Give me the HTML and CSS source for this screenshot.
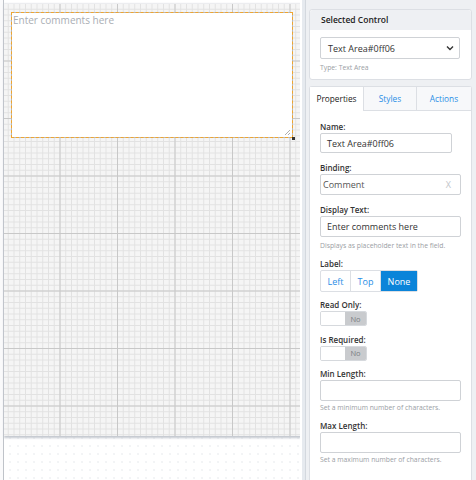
FILE: index.html
```html
<!DOCTYPE html>
<html>
<head>
<meta charset="utf-8">
<link rel="stylesheet" href="styles.css">
</head>
<body>
<div class="app">
  <div class="workspace">
    <div class="scroller">
      <div class="canvas">
        <div class="field">
          <div class="placeholder">Enter comments here</div>
          <svg class="grip" width="8" height="8" viewBox="0 0 8 8"><path d="M7 2 L2 7 M7 5 L5 7" stroke="#999" stroke-width="0.8"/></svg>
          <span class="handle"></span>
        </div>
      </div>
    </div>
  </div>
  <div class="splitter"></div>
  <div class="panel">
    <div class="card">
      <div class="card-head">Selected Control</div>
      <div class="card-body">
        <div class="select">
          <span>Text Area#0ff06</span>
          <svg width="8" height="6" viewBox="0 0 8 6"><path d="M1 1.5 L4 4.5 L7 1.5" fill="none" stroke="#333" stroke-width="1.4"/></svg>
        </div>
        <div class="hint">Type: Text Area</div>
      </div>
    </div>
    <div class="card tabs-card">
      <div class="tabs">
        <div class="tab active">Properties</div>
        <div class="tab">Styles</div>
        <div class="tab">Actions</div>
      </div>
      <div class="props">
        <div class="lbl">Name:</div>
        <div class="input short">Text Area#0ff06</div>
        <div class="lbl">Binding:</div>
        <div class="input binding"><span class="muted">Comment</span><span class="x">X</span></div>
        <div class="lbl">Display Text:</div>
        <div class="input with-hint">Enter comments here</div>
        <div class="hint loose">Displays as placeholder text in the field.</div>
        <div class="lbl">Label:</div>
        <div class="btn-group">
          <span class="b">Left</span><span class="b">Top</span><span class="b on">None</span>
        </div>
        <div class="lbl">Read Only:</div>
        <div class="toggle"><span class="t-off"></span><span class="t-no">No</span></div>
        <div class="lbl">Is Required:</div>
        <div class="toggle"><span class="t-off"></span><span class="t-no">No</span></div>
        <div class="lbl">Min Length:</div>
        <div class="input with-hint"></div>
        <div class="hint">Set a minimum number of characters.</div>
        <div class="lbl">Max Length:</div>
        <div class="input with-hint"></div>
        <div class="hint">Set a maximum number of characters.</div>
      </div>
    </div>
  </div>
</div>
</body>
</html>
```

FILE: styles.css
```css
* { box-sizing: border-box; }
html, body { margin: 0; padding: 0; }
body {
  font-family: "Open Sans", "Liberation Sans", sans-serif;
  font-size: 8px;
  color: #333;
  width: 476px;
  height: 480px;
  overflow: hidden;
  background: #fff;
}
.app {
  display: flex;
  height: 480px;
}
.workspace {
  flex: 0 0 300px;
  padding-left: 3px;
  background: #fafafb;
}
.scroller {
  height: 100%;
  padding-top: 4px;
  border-left: 1px solid #bfc3c9;
  background-color: #fff;
  background-image: radial-gradient(circle, #eceef1 0.6px, transparent 0.9px);
  background-size: 8px 8px;
  background-position: 2px 2px;
}
.canvas {
  width: 296px;
  height: 432px;
  background-color: #f5f5f5;
  background-image:
    linear-gradient(to right, #c8c8c8 1px, transparent 1px),
    linear-gradient(to bottom, #c8c8c8 1px, transparent 1px),
    linear-gradient(to right, #e2e2e2 1px, transparent 1px),
    linear-gradient(to bottom, #e2e2e2 1px, transparent 1px);
  background-size: 57.5px 57.5px, 57.5px 57.5px, 5.75px 5.75px, 5.75px 5.75px;
  background-position: -2px -1px;
  box-shadow: 1px 1px 2px 1px #c4c8cf;
  padding: 8px 0 0 7px;
}
.field {
  position: relative;
  width: 282px;
  height: 126px;
  background: #fff;
  border: 1px solid #b8b8b8;
  padding: 1px 1px;
}
.field::before {
  content: "";
  position: absolute;
  inset: -1px;
  border: 1px dashed #f0a52e;
  pointer-events: none;
}
.placeholder {
  font-size: 10px;
  color: #a9adb3;
  line-height: 13px;
}
.grip {
  position: absolute;
  right: 1px;
  bottom: 1px;
}
.handle {
  position: absolute;
  right: -3px;
  bottom: -3px;
  width: 3px;
  height: 3px;
  background: #333;
}
.splitter {
  flex: 0 0 6px;
  background: #e6eaef;
  border-left: 2px solid #fff;
  border-right: 1px solid #d3d8de;
}
.panel {
  flex: 1;
  background: #eef0f3;
  padding: 9px 4px 0 3px;
  display: flex;
  flex-direction: column;
  gap: 6px;
}
.card {
  background: #fff;
  border: 1px solid #dcdfe4;
  border-radius: 3px;
}
.card-head {
  background: #eef0f3;
  height: 20px;
  line-height: 20px;
  padding-left: 11px;
  font-weight: 600;
  font-size: 8.5px;
  color: #222;
  border-radius: 3px 3px 0 0;
}
.card-body {
  padding: 7px 11px 7px 10px;
}
.select {
  height: 22px;
  border: 1px solid #cfd2d6;
  border-radius: 2px;
  display: flex;
  align-items: center;
  justify-content: space-between;
  padding: 0 5px 0 7px;
  color: #333;
  font-size: 9px;
}
.hint {
  font-size: 6.8px;
  color: #9a9ea4;
  margin-top: 4px;
  line-height: 9px;
}
.tabs-card {
  flex: 1;
  border-bottom: none;
  border-radius: 3px 3px 0 0;
}
.tabs {
  display: flex;
  height: 24px;
}
.tab {
  flex: 0 0 53px;
  display: flex;
  align-items: center;
  justify-content: center;
  color: #2a8ee6;
  background: #f7f8fa;
  border-bottom: 1px solid #dcdfe4;
  border-left: 1px solid #dcdfe4;
  font-size: 8.3px;
}
.tab:last-child { flex: 1; }
.tab.active {
  color: #222;
  background: #fff;
  border-bottom-color: transparent;
  border-left: none;
}
.props {
  padding: 10px 10px 0 10px;
}
.lbl {
  font-weight: 600;
  color: #333;
  font-size: 8px;
  line-height: 11px;
  margin-bottom: 1px;
}
.input {
  height: 21px;
  border: 1px solid #cfd2d6;
  border-radius: 2px;
  display: flex;
  align-items: center;
  padding: 0 6px;
  margin-bottom: 9px;
  color: #333;
  font-size: 9px;
}
.input.short {
  width: 132px;
  height: 20px;
}
.input.binding {
  justify-content: space-between;
  padding: 0 9px 0 2px;
}
.input.with-hint { margin-bottom: 0; }
.muted { color: #555; }
.x { color: #c2c5c9; font-size: 9px; }
.props .hint {
  margin-top: 2px;
  margin-bottom: 8px;
}
.props .hint.loose {
  margin-top: 4px;
  margin-bottom: 8px;
}
.btn-group {
  display: flex;
  width: 98px;
  height: 22px;
  border: 1px solid #dcdfe4;
  border-radius: 2px;
  margin-bottom: 7px;
  font-size: 9px;
}
.b {
  display: flex;
  align-items: center;
  justify-content: center;
  color: #2a8ee6;
  width: 30px;
  border-right: 1px solid #dcdfe4;
}
.b.on {
  flex: 1;
  background: #0b84d9;
  color: #fff;
  border-right: none;
}
.toggle {
  display: flex;
  width: 47px;
  height: 15px;
  border: 1px solid #d6d9dd;
  border-radius: 2px;
  margin-bottom: 7.5px;
  overflow: hidden;
}
.t-off { width: 24px; background: #fff; }
.t-no {
  flex: 1;
  background: #c9cbce;
  color: #7a7d82;
  font-size: 7.5px;
  display: flex;
  align-items: center;
  justify-content: center;
}
```
